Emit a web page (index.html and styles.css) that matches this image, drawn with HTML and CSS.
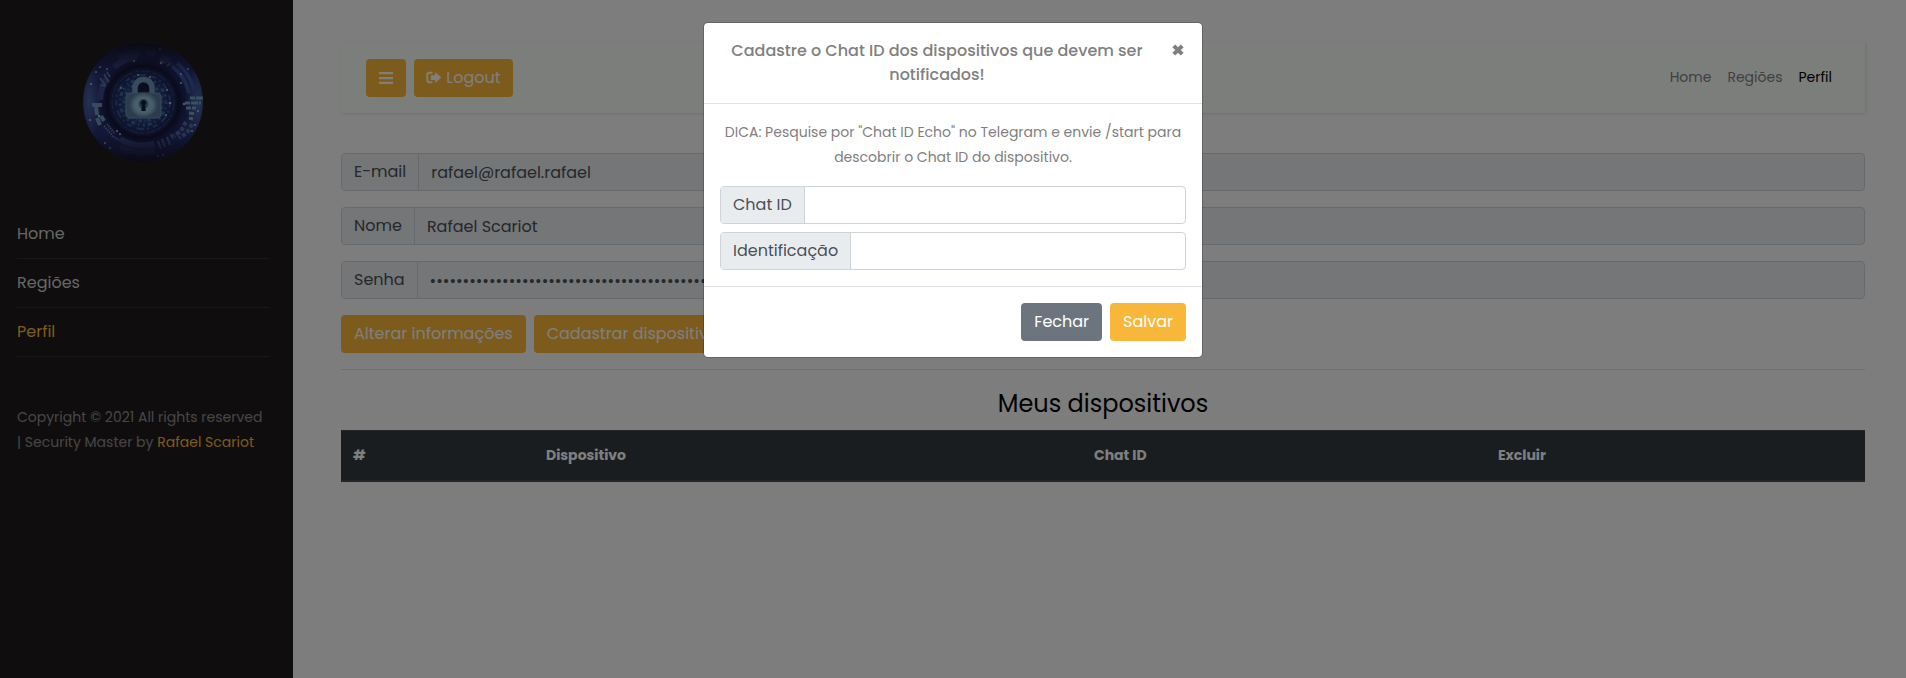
FILE: index.html
```html
<!DOCTYPE html>
<html lang="pt-BR">
<head>
<meta charset="utf-8">
<title>Perfil</title>
<link rel="stylesheet" href="styles.css">
</head>
<body>
<div class="wrapper">
  <nav class="sidebar">
    <svg class="logo" viewBox="-60 -60 120 120" width="120" height="120">
      <defs>
        <radialGradient id="disc"><stop offset="0" stop-color="#3a6aa8"/><stop offset=".4" stop-color="#22306a"/><stop offset=".62" stop-color="#1a1c46"/><stop offset=".78" stop-color="#262e70"/><stop offset="1" stop-color="#262e70"/></radialGradient>
        <linearGradient id="shade" x1="0" y1="0" x2="0" y2="1"><stop offset="0" stop-color="#141226" stop-opacity=".95"/><stop offset=".28" stop-color="#141226" stop-opacity="0"/><stop offset=".77" stop-color="#141226" stop-opacity="0"/><stop offset="1" stop-color="#141226" stop-opacity=".95"/></linearGradient>
        <radialGradient id="side"><stop offset="0" stop-color="#4a64a4"/><stop offset="1" stop-color="#4a64a4" stop-opacity="0"/></radialGradient>
        <radialGradient id="body"><stop offset="0" stop-color="#a4cede"/><stop offset=".65" stop-color="#8ebad2"/><stop offset="1" stop-color="#5c7c9c"/></radialGradient>
        <filter id="soft" x="-20%" y="-20%" width="140%" height="140%"><feGaussianBlur stdDeviation=".6"/></filter>
        <clipPath id="round"><circle r="60"/></clipPath>
      </defs>
      <g clip-path="url(#round)">
        <circle r="60" fill="url(#disc)"/>
        <ellipse cx="-54" cy="0" rx="12" ry="40" fill="url(#side)"/>
        <ellipse cx="55" cy="2" rx="12" ry="40" fill="url(#side)"/>
        <g fill="none" filter="url(#soft)">
          <circle r="36" stroke="#17193c" stroke-width="4"/>
          <circle r="31" stroke="#33477f" stroke-width="1" stroke-dasharray="9 3 4 2"/>
          <circle r="27" stroke="#3a5c96" stroke-width="2" stroke-dasharray="5 4 2 3 8 5" opacity=".8"/>
          <circle r="23" stroke="#4a76b4" stroke-width="3" stroke-dasharray="2 4 1 3 4 3" opacity=".7"/>
          <circle r="19" stroke="#5b8cc4" stroke-width="3" stroke-dasharray="1 3 3 2" opacity=".5"/>
          <path d="M-24-44A50 50 0 0 1-3-50M3-50A50 50 0 0 1 12-48M18-45L27-41M-23 45A51 51 0 0 0 12 49" stroke="#34408c" stroke-width="6"/>
          <path d="M-43-2A43 43 0 0 1-36-24M-29-35A45 45 0 0 1-6-45M-23 37A44 44 0 0 0 11 42" stroke="#39478c" stroke-width="6"/>
          <path d="M29-36A46 46 0 0 1 46-9M34-39A52 52 0 0 1 51-12" stroke="#3c529c" stroke-width="4"/>
          <path d="M-51 3H-41M-47 5L-46 13M-46 16L-43 23M-42 14L-39 19" stroke="#6f96b8" stroke-width="4"/>
          <path d="M-39 24L-31 33M-36 22L-28 32M-31 34L-24 38" stroke="#5f76a2" stroke-width="2" stroke-dasharray="1.500 1"/>
          <path d="M-43-24L-38-17M-39-28L-34-20M-36-30L-33-25M-43-17L-37-16" stroke="#6076a4" stroke-width="1.500"/>
          <path d="M42 1H58M47-4H60M43 6H53M46 11L52 12M46 16L50 17" stroke="#74a4be" stroke-width="3" stroke-dasharray="5 1 7 1"/>
          <path d="M43 20L38 29L31 34M49 22L44 31L36 36" stroke="#526a9c" stroke-width="4" stroke-dasharray="4 2"/>
          <path d="M15 39L18 47M19 37L22 45M24 35L27 43M28 32L30 37M17-42L22-39M28-39L24-36" stroke="#5164a0" stroke-width="2"/>
        </g>
        <g fill="#9fbfe4">
          <circle cx="17" cy="-53" r="1"/><circle cx="18" cy="-39" r="1.200"/><circle cx="-9" cy="-41" r="1.100"/><circle cx="45" cy="-33" r="1"/><circle cx="38" cy="-28" r="1"/><circle cx="38" cy="-19" r="1"/><circle cx="-52" cy="-18" r="1.100"/><circle cx="-47" cy="-30" r="1"/><circle cx="-43" cy="-35" r="1"/><circle cx="-36" cy="-33" r="1"/><circle cx="-53" cy="18" r="1.100"/><circle cx="-44" cy="14" r="1.200"/><circle cx="-38" cy="41" r="1.100"/><circle cx="-33" cy="46" r="1"/><circle cx="-26" cy="29" r="1"/><circle cx="-23" cy="32" r="1"/><circle cx="15" cy="54" r="1"/><circle cx="20" cy="53" r="1"/><circle cx="49" cy="29" r="1"/><circle cx="52" cy="23" r="1"/><circle cx="55" cy="9" r="1.100"/><circle cx="41" cy="2" r="1.200"/><circle cx="27" cy="1" r="1.300"/><circle cx="24" cy="-12" r="1"/><circle cx="23" cy="13" r="1"/><circle cx="-22" cy="-14" r="1"/><circle cx="-5" cy="-27" r="1"/><circle cx="7" cy="-25" r="1"/>
        </g>
        <circle r="60" fill="url(#shade)"/>
        <g filter="url(#soft)">
          <path d="M-8-8V-14A8.500 8.500 0 0 1 9-14V-8" fill="#141c40" stroke="#7196b8" stroke-width="5.500"/>
          <rect x="-17" y="-9" width="35" height="25" rx="4" fill="#58799c" stroke="#6b94b0"/>
          <ellipse cx=".5" cy="3" rx="14" ry="12.500" fill="url(#body)"/>
          <circle cx=".5" cy="2" r="5" fill="#557d9f"/>
          <path d="M.5-2A2.800 2.800 0 0 1 2.200 3L2.700 9H-1.700L-1.200 3A2.800 2.800 0 0 1 .5-2Z" fill="#10203f"/>
        </g>
      </g>
    </svg>
    <ul class="menu">
      <li><a>Home</a></li>
      <li><a>Regiões</a></li>
      <li class="active"><a>Perfil</a></li>
    </ul>
    <p class="copyright">Copyright © 2021 All rights reserved<br>| Security Master by <a>Rafael Scariot</a></p>
  </nav>
  <main class="content">
    <header class="navbar">
      <div class="nav-buttons">
        <button class="btn primary burger"><svg width="14" height="16" viewBox="0 0 14 16" fill="currentColor"><path d="M0 2h14v2.300H0zM0 6.900h14v2.300H0zM0 11.800h14v2.300H0z"/></svg></button>
        <button class="btn primary logout"><svg width="16" height="14" viewBox="0 0 16 14"><path d="M6.500 1.800H3.200Q1.300 1.800 1.300 3.700V9.300Q1.300 11.200 3.200 11.200H6.500" fill="none" stroke="currentColor" stroke-width="1.900"/><path d="M4.800 4.300H9.200V1L15.400 6.500L9.200 12V9H4.800Z" fill="currentColor"/></svg>Logout</button>
      </div>
      <div class="links"><a>Home</a><a>Regiões</a><a class="current">Perfil</a></div>
    </header>
    <div class="group"><label>E-mail</label><div class="field">rafael@rafael.rafael</div></div>
    <div class="group"><label>Nome</label><div class="field">Rafael Scariot</div></div>
    <div class="group"><label>Senha</label><div class="field">••••••••••••••••••••••••••••••••••••••••••••••••••••••••••••</div></div>
    <div class="actions"><button class="btn primary">Alterar informações</button><button class="btn primary">Cadastrar dispositivo</button></div>
    <hr>
    <h2>Meus dispositivos</h2>
    <table>
      <thead><tr><th class="c-num">#</th><th class="c-dev">Dispositivo</th><th class="c-chat">Chat ID</th><th>Excluir</th></tr></thead>
    </table>
  </main>
</div>
<div class="backdrop">
  <section class="modal">
    <div class="modal-header">
      <h5>Cadastre o Chat ID dos dispositivos que devem ser<br>notificados!</h5>
      <svg class="close" width="12" height="12" viewBox="0 0 12 12"><path d="M1.800 1.800L10.200 10.200M10.200 1.800L1.800 10.200" stroke="#7f7f7f" stroke-width="4"/></svg>
    </div>
    <div class="modal-body">
      <p>DICA: Pesquise por "Chat ID Echo" no Telegram e envie /start para<br>descobrir o Chat ID do dispositivo.</p>
      <div class="group light"><label>Chat ID</label><div class="field"></div></div>
      <div class="group light"><label>Identificação</label><div class="field"></div></div>
    </div>
    <div class="modal-footer"><button class="btn secondary">Fechar</button><button class="btn primary">Salvar</button></div>
  </section>
</div>
</body>
</html>
```
FILE: styles.css
```css
* { box-sizing: border-box; }
body { margin: 0; height: 678px; overflow: hidden; background: #fafafa; color: #808080; font: 400 14px/1.8 Poppins, Inter, sans-serif; }
.wrapper { display: flex; height: 678px; }
.sidebar { width: 293px; flex: none; padding: 42px 24px 0 17px; background: #1f1b1d; color: #fff; }
.logo { display: block; margin: 0 0 47.500px 66px; }
.menu { list-style: none; margin: 0; padding: 0; font-size: 16px; color: #ccc; }
.menu li { height: 49px; padding: 10px 0; border-bottom: 1px solid rgba(255,255,255,.1); line-height: 28.800px; }
.menu .active { color: #f8b739; }
.copyright { margin: 48px 0 0; line-height: 25.200px; color: rgba(255,255,255,.5); white-space: nowrap; }
.copyright a { color: #f8b739; }
.content { flex: 1; padding: 42px 41px 0 48px; }
.navbar { display: flex; justify-content: space-between; align-items: center; height: 71px; margin-bottom: 40px; padding: 0 33px 0 25px; background: #f8fcf9; box-shadow: 1px 1px 3px rgba(0,0,0,.1); }
.nav-buttons, .actions { display: flex; gap: 8px; }
.btn { display: flex; align-items: center; justify-content: center; height: 38px; padding: 0 13px; border: 0; border-radius: 4px; font: 400 16px/24px Poppins, Inter, sans-serif; color: #fff; white-space: nowrap; }
.primary { background: #f8b739; }
.secondary { background: #6c757d; }
.burger { width: 40px; }
.logout { width: 99px; padding: 0; gap: 4px; }
.links { display: flex; gap: 16px; }
.links .current { color: #000; }
.group { display: flex; height: 38px; margin-bottom: 16px; border: 1px solid #ced4da; border-radius: 4px; background: #e9ecef; font-size: 16px; line-height: 36px; color: #495057; overflow: hidden; white-space: nowrap; }
.group label { flex: none; padding: 0 12px; border-right: 1px solid #ced4da; background: #e9ecef; }
.field { flex: 1; padding-left: 12px; line-height: 37px; overflow: hidden; }
.actions { margin-bottom: 16px; }
hr { margin: 0; border: 0; border-top: 1px solid rgba(0,0,0,.1); }
h2 { margin: 16px 0 8px; font-size: 24px; line-height: 36px; font-weight: 400; text-align: center; color: #000; }
table { width: 100%; table-layout: fixed; border-collapse: collapse; background: #343a40; color: #fff; }
th { height: 50px; padding: 0 12px; border-top: 1px solid #454d55; border-bottom: 2px solid #454d55; text-align: left; font-weight: 700; }
.c-num { width: 193px; }
.c-dev { width: 548px; }
.c-chat { width: 404px; }
.backdrop { position: absolute; inset: 0; padding-top: 22px; background: rgba(0,0,0,.5); }
.modal { width: 500px; height: 336px; margin: 0 auto; border: 1px solid rgba(0,0,0,.2); border-radius: 5px; background: #fff; background-clip: padding-box; }
.modal-header { display: flex; justify-content: space-between; height: 81px; padding: 16px 18px 0 15px; border-bottom: 1px solid #dee2e6; }
h5 { width: 436px; margin: 0; font-size: 16px; line-height: 24px; font-weight: 500; text-align: center; white-space: nowrap; }
.close { margin-top: 5px; }
.modal-body { height: 182px; padding: 16px 16px 0; }
.modal-body p { margin: 0 0 16px; line-height: 25.200px; text-align: center; white-space: nowrap; }
.light { margin-bottom: 8px; background: #fff; }
.modal-footer { display: flex; justify-content: flex-end; gap: 8px; padding: 16px; border-top: 1px solid #dee2e6; }
```
